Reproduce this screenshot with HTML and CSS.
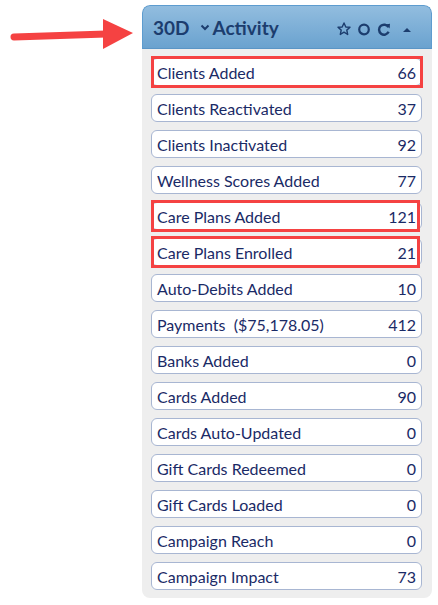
FILE: index.html
```html
<!DOCTYPE html>
<html lang="en">
<head>
    <meta charset="UTF-8">
    <meta name="viewport" content="width=device-width, initial-scale=1.0">
    <title>Activity</title>
    <link rel="stylesheet" href="styles.css">
</head>
<body>
    <div class="page">
        <svg class="pointer" width="128" height="34" viewBox="0 0 128 34">
            <path d="M4 18 L96 15" stroke="#f54242" stroke-width="7" stroke-linecap="round" fill="none"/>
            <polygon points="93,0 123,14 93,30" fill="#f54242"/>
        </svg>
        <section class="panel">
            <div class="panel-head">
                <div class="panel-title">
                    <span>30D</span>
                    <svg class="chev" width="10" height="7" viewBox="0 0 10 7"><path d="M1.5 1.5 L5 5 L8.5 1.5" stroke="#1c3d6e" stroke-width="2" fill="none"/></svg>
                    <span>Activity</span>
                </div>
                <div class="panel-tools">
                    <svg width="14" height="14" viewBox="0 0 14 14"><polygon points="7,1 8.8,5 13,5.3 9.8,8.1 10.7,12.5 7,10.2 3.3,12.5 4.2,8.1 1,5.3 5.2,5" stroke="#1c3d6e" stroke-width="1.4" fill="none" stroke-linejoin="round"/></svg>
                    <svg width="14" height="14" viewBox="0 0 14 14"><circle cx="7" cy="7.5" r="4.8" stroke="#1c3d6e" stroke-width="2.2" fill="none"/></svg>
                    <svg width="14" height="14" viewBox="0 0 14 14"><path d="M11.4 5.2 A5 5 0 1 0 11.6 9.8" stroke="#1c3d6e" stroke-width="2.4" fill="none"/><polygon points="8.4,2.4 13,1.8 12.6,6.6" fill="#1c3d6e"/></svg>
                    <svg class="collapse" width="12" height="14" viewBox="0 0 12 14"><polygon points="2,10 6,6 10,10" fill="#1c3d6e"/></svg>
                </div>
            </div>
            <div class="panel-body">
                <div class="stat marked wide"><span>Clients Added</span><span>66</span></div>
                <div class="stat"><span>Clients Reactivated</span><span>37</span></div>
                <div class="stat"><span>Clients Inactivated</span><span>92</span></div>
                <div class="stat"><span>Wellness Scores Added</span><span>77</span></div>
                <div class="stat marked"><span>Care Plans Added</span><span>121</span></div>
                <div class="stat marked"><span>Care Plans Enrolled</span><span>21</span></div>
                <div class="stat"><span>Auto-Debits Added</span><span>10</span></div>
                <div class="stat"><span>Payments&nbsp; ($75,178.05)</span><span>412</span></div>
                <div class="stat"><span>Banks Added</span><span>0</span></div>
                <div class="stat"><span>Cards Added</span><span>90</span></div>
                <div class="stat"><span>Cards Auto-Updated</span><span>0</span></div>
                <div class="stat"><span>Gift Cards Redeemed</span><span>0</span></div>
                <div class="stat"><span>Gift Cards Loaded</span><span>0</span></div>
                <div class="stat"><span>Campaign Reach</span><span>0</span></div>
                <div class="stat"><span>Campaign Impact</span><span>73</span></div>
            </div>
        </section>
    </div>
</body>
</html>
```

FILE: styles.css
```css
body { margin: 0; background: #fff; font-family: Lato, "Open Sans", sans-serif; color: #1a2a66; }
.page { display: flex; align-items: flex-start; padding: 5px 0 0 10px; }
.pointer { display: block; margin-top: 14px; }
.panel { width: 290px; margin-left: 4px; background: #eeeeee; border-radius: 8px; overflow: hidden; }
.panel-head { height: 42px; display: flex; align-items: center; justify-content: space-between; padding: 0 10px 0 10px; background: linear-gradient(#92bddf, #6aa2cf); border: 1px solid #5d9ccf; border-bottom-color: #5a95c6; border-radius: 8px 8px 0 0; }
.panel-title { display: flex; align-items: center; font-size: 19px; font-weight: bold; color: #1c3d6e; }
.chev { margin: 1px 3px 0 10px; }
.panel-tools { display: flex; align-items: center; gap: 6px; padding-top: 3px; padding-right: 8px; }
.collapse { margin-left: 4px; }
.panel-body { display: flex; flex-direction: column; gap: 8px; padding: 9px 10px 8px 9px; }
.stat { position: relative; height: 26px; display: flex; align-items: center; justify-content: space-between; padding: 0 5px; background: #fff; border: 1px solid #a8b6d2; border-radius: 6px; font-size: 16px; }
.stat.marked::after { content: ""; position: absolute; top: -3px; bottom: -3px; left: -1px; right: 1px; border: 3px solid #f54242; pointer-events: none; }
.stat.wide::after { top: -3px; bottom: -3px; right: -2px; }
```
